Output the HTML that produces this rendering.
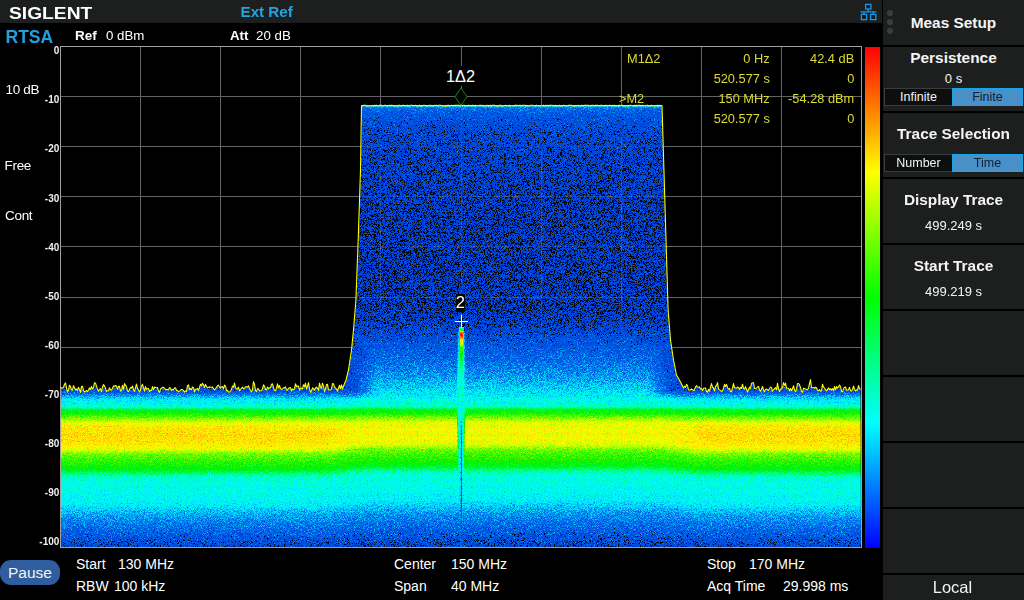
<!DOCTYPE html>
<html><head><meta charset="utf-8"><title>RTSA</title>
<style>
html,body{margin:0;padding:0;background:#000;}
body{width:1024px;height:600px;position:relative;overflow:hidden;font-family:"Liberation Sans",sans-serif;color:#fff;font-size:14px;}
.abs{position:absolute;white-space:nowrap;}
#top{left:0;top:0;width:882px;height:23px;background:#1c1f1e;}
.t{position:absolute;white-space:nowrap;line-height:16px;}
.b{font-weight:bold;}
.yl{position:absolute;right:964.7px;font-size:10px;font-weight:bold;line-height:12px;text-align:right;color:#f0f0f0;}
.mk{position:absolute;color:#dcdc30;font-size:13.4px;line-height:16px;white-space:nowrap;transform:scaleX(0.955);transform-origin:0 50%;}
.mr{text-align:right;transform-origin:100% 50%;}
#panel{position:absolute;left:883px;top:0;width:141px;height:600px;background:#000;}
.btn{position:absolute;left:0;width:141px;background:#1c1f1d;text-align:center;}
.bt{position:absolute;left:0;width:141px;text-align:center;font-weight:bold;font-size:15.4px;line-height:18px;color:#f4f4f4;}
.bv{position:absolute;left:0;width:141px;text-align:center;font-size:13px;line-height:16px;color:#f4f4f4;}
.tg{position:absolute;top:40.5px;height:16px;font-size:12.5px;line-height:16px;text-align:center;}
.tgl{left:1px;width:67px;background:#0d0f0e;border:1px solid #3a3d3c;color:#f4f4f4;}
.tgr{left:69px;width:69px;background:#4a90c8;border:1px solid #16a6e8;color:#10202c;}
</style></head><body>
<div id="top" class="abs"></div>
<svg class="abs" style="left:0;top:0" width="1024" height="600" viewBox="0 0 1024 600">
<defs>
<linearGradient id="gf" gradientUnits="userSpaceOnUse" x1="0" y1="376" x2="0" y2="547"><stop offset="0.0000" stop-color="rgb(9,102,0)"/><stop offset="0.0585" stop-color="rgb(13,102,0)"/><stop offset="0.0819" stop-color="rgb(19,102,0)"/><stop offset="0.0994" stop-color="rgb(31,102,0)"/><stop offset="0.1111" stop-color="rgb(42,92,0)"/><stop offset="0.1228" stop-color="rgb(54,82,0)"/><stop offset="0.1345" stop-color="rgb(62,82,0)"/><stop offset="0.1462" stop-color="rgb(68,82,0)"/><stop offset="0.1637" stop-color="rgb(73,82,0)"/><stop offset="0.1813" stop-color="rgb(79,82,0)"/><stop offset="0.1901" stop-color="rgb(97,82,0)"/><stop offset="0.1988" stop-color="rgb(115,82,0)"/><stop offset="0.2222" stop-color="rgb(133,82,0)"/><stop offset="0.2339" stop-color="rgb(145,82,0)"/><stop offset="0.2456" stop-color="rgb(156,82,0)"/><stop offset="0.2573" stop-color="rgb(166,82,0)"/><stop offset="0.2690" stop-color="rgb(176,82,0)"/><stop offset="0.2807" stop-color="rgb(186,82,0)"/><stop offset="0.2924" stop-color="rgb(194,82,0)"/><stop offset="0.3158" stop-color="rgb(199,82,0)"/><stop offset="0.3450" stop-color="rgb(201,82,0)"/><stop offset="0.3743" stop-color="rgb(199,82,0)"/><stop offset="0.4035" stop-color="rgb(195,82,0)"/><stop offset="0.4211" stop-color="rgb(189,82,0)"/><stop offset="0.4327" stop-color="rgb(178,82,0)"/><stop offset="0.4444" stop-color="rgb(166,82,0)"/><stop offset="0.4561" stop-color="rgb(156,82,0)"/><stop offset="0.4795" stop-color="rgb(147,82,0)"/><stop offset="0.5029" stop-color="rgb(139,82,0)"/><stop offset="0.5263" stop-color="rgb(130,82,0)"/><stop offset="0.5497" stop-color="rgb(117,82,0)"/><stop offset="0.5673" stop-color="rgb(99,82,0)"/><stop offset="0.5848" stop-color="rgb(84,82,0)"/><stop offset="0.6082" stop-color="rgb(76,66,0)"/><stop offset="0.6316" stop-color="rgb(74,61,0)"/><stop offset="0.6959" stop-color="rgb(71,61,0)"/><stop offset="0.7485" stop-color="rgb(68,66,0)"/><stop offset="0.7836" stop-color="rgb(57,76,0)"/><stop offset="0.8129" stop-color="rgb(50,82,0)"/><stop offset="0.8538" stop-color="rgb(42,82,0)"/><stop offset="0.9006" stop-color="rgb(33,102,0)"/><stop offset="0.9474" stop-color="rgb(24,115,0)"/><stop offset="1.0000" stop-color="rgb(15,128,0)"/></linearGradient>
<linearGradient id="gb" gradientUnits="userSpaceOnUse" x1="0" y1="104" x2="0" y2="398"><stop offset="0.0000" stop-color="rgb(54,64,0)"/><stop offset="0.0085" stop-color="rgb(54,64,0)"/><stop offset="0.0136" stop-color="rgb(36,84,0)"/><stop offset="0.0272" stop-color="rgb(28,97,0)"/><stop offset="0.0544" stop-color="rgb(22,107,0)"/><stop offset="0.1054" stop-color="rgb(15,115,0)"/><stop offset="0.1905" stop-color="rgb(11,115,0)"/><stop offset="0.3265" stop-color="rgb(8,115,0)"/><stop offset="0.4626" stop-color="rgb(7,115,0)"/><stop offset="0.6837" stop-color="rgb(7,115,0)"/><stop offset="0.7347" stop-color="rgb(10,115,0)"/><stop offset="0.7687" stop-color="rgb(15,115,0)"/><stop offset="0.8027" stop-color="rgb(22,112,0)"/><stop offset="0.8367" stop-color="rgb(28,107,0)"/><stop offset="0.8707" stop-color="rgb(34,102,0)"/><stop offset="0.8980" stop-color="rgb(40,99,0)"/><stop offset="0.9252" stop-color="rgb(46,97,0)"/><stop offset="0.9558" stop-color="rgb(55,92,0)"/><stop offset="0.9796" stop-color="rgb(62,87,0)"/><stop offset="1.0000" stop-color="rgb(69,82,0)"/></linearGradient>
<linearGradient id="gi" gradientUnits="userSpaceOnUse" x1="0" y1="398" x2="0" y2="547"><stop offset="0.0000" stop-color="rgb(69,82,0)"/><stop offset="0.0201" stop-color="rgb(73,82,0)"/><stop offset="0.0403" stop-color="rgb(76,82,0)"/><stop offset="0.0604" stop-color="rgb(84,82,0)"/><stop offset="0.0705" stop-color="rgb(102,82,0)"/><stop offset="0.0805" stop-color="rgb(117,82,0)"/><stop offset="0.1074" stop-color="rgb(135,82,0)"/><stop offset="0.1208" stop-color="rgb(148,82,0)"/><stop offset="0.1342" stop-color="rgb(158,82,0)"/><stop offset="0.1477" stop-color="rgb(168,82,0)"/><stop offset="0.1611" stop-color="rgb(178,82,0)"/><stop offset="0.1745" stop-color="rgb(182,82,0)"/><stop offset="0.1946" stop-color="rgb(186,82,0)"/><stop offset="0.2215" stop-color="rgb(187,82,0)"/><stop offset="0.2550" stop-color="rgb(187,82,0)"/><stop offset="0.2886" stop-color="rgb(185,82,0)"/><stop offset="0.3087" stop-color="rgb(180,82,0)"/><stop offset="0.3221" stop-color="rgb(172,82,0)"/><stop offset="0.3356" stop-color="rgb(163,82,0)"/><stop offset="0.3490" stop-color="rgb(153,82,0)"/><stop offset="0.3758" stop-color="rgb(145,82,0)"/><stop offset="0.4027" stop-color="rgb(138,82,0)"/><stop offset="0.4295" stop-color="rgb(130,82,0)"/><stop offset="0.4564" stop-color="rgb(117,82,0)"/><stop offset="0.4765" stop-color="rgb(99,82,0)"/><stop offset="0.4966" stop-color="rgb(84,82,0)"/><stop offset="0.5235" stop-color="rgb(76,66,0)"/><stop offset="0.5503" stop-color="rgb(74,61,0)"/><stop offset="0.6309" stop-color="rgb(70,61,0)"/><stop offset="0.6913" stop-color="rgb(65,66,0)"/><stop offset="0.7315" stop-color="rgb(56,76,0)"/><stop offset="0.7651" stop-color="rgb(48,82,0)"/><stop offset="0.8121" stop-color="rgb(41,82,0)"/><stop offset="0.8658" stop-color="rgb(32,107,0)"/><stop offset="0.9262" stop-color="rgb(23,128,0)"/><stop offset="1.0000" stop-color="rgb(13,140,0)"/></linearGradient>
<linearGradient id="gsO" gradientUnits="userSpaceOnUse" x1="0" y1="324" x2="0" y2="547"><stop offset="0.0000" stop-color="rgb(51,82,0)"/><stop offset="0.0135" stop-color="rgb(56,82,0)"/><stop offset="0.0493" stop-color="rgb(69,82,0)"/><stop offset="0.0942" stop-color="rgb(71,82,0)"/><stop offset="0.1614" stop-color="rgb(71,82,0)"/><stop offset="0.2511" stop-color="rgb(73,82,0)"/><stop offset="0.3632" stop-color="rgb(74,82,0)"/><stop offset="0.3946" stop-color="rgb(76,82,0)"/><stop offset="0.5650" stop-color="rgb(74,82,0)"/><stop offset="0.6996" stop-color="rgb(69,82,0)"/><stop offset="0.7892" stop-color="rgb(61,82,0)"/><stop offset="0.8789" stop-color="rgb(48,82,0)"/><stop offset="1.0000" stop-color="rgb(26,82,0)"/></linearGradient>
<linearGradient id="gsC" gradientUnits="userSpaceOnUse" x1="0" y1="324" x2="0" y2="547"><stop offset="0.0000" stop-color="rgb(64,82,0)"/><stop offset="0.0157" stop-color="rgb(69,82,0)"/><stop offset="0.0224" stop-color="rgb(102,82,0)"/><stop offset="0.0291" stop-color="rgb(133,82,0)"/><stop offset="0.0336" stop-color="rgb(191,82,0)"/><stop offset="0.0404" stop-color="rgb(247,82,0)"/><stop offset="0.0538" stop-color="rgb(247,82,0)"/><stop offset="0.0628" stop-color="rgb(222,82,0)"/><stop offset="0.0717" stop-color="rgb(199,82,0)"/><stop offset="0.0852" stop-color="rgb(184,82,0)"/><stop offset="0.0987" stop-color="rgb(158,82,0)"/><stop offset="0.1166" stop-color="rgb(133,82,0)"/><stop offset="0.1435" stop-color="rgb(115,82,0)"/><stop offset="0.1704" stop-color="rgb(97,82,0)"/><stop offset="0.2063" stop-color="rgb(84,82,0)"/><stop offset="0.2511" stop-color="rgb(79,82,0)"/><stop offset="0.3408" stop-color="rgb(79,82,0)"/><stop offset="0.3857" stop-color="rgb(76,82,0)"/><stop offset="0.4305" stop-color="rgb(64,82,0)"/><stop offset="0.4843" stop-color="rgb(36,82,0)"/><stop offset="0.7892" stop-color="rgb(28,82,0)"/><stop offset="0.9238" stop-color="rgb(13,128,0)"/><stop offset="1.0000" stop-color="rgb(5,128,0)"/></linearGradient>
<linearGradient id="shl" x1="0" y1="0" x2="1" y2="0"><stop offset="0" stop-color="#000" stop-opacity="0.55"/><stop offset="1" stop-color="#000" stop-opacity="0"/></linearGradient>
<linearGradient id="shr" x1="1" y1="0" x2="0" y2="0"><stop offset="0" stop-color="#000" stop-opacity="0.55"/><stop offset="1" stop-color="#000" stop-opacity="0"/></linearGradient>
<linearGradient id="cbar" x1="0" y1="0" x2="0" y2="1">
<stop offset="0" stop-color="#ff0000"/><stop offset="0.125" stop-color="#ff8000"/><stop offset="0.25" stop-color="#ffff00"/><stop offset="0.375" stop-color="#80ff00"/><stop offset="0.5" stop-color="#00ff00"/>
<stop offset="0.625" stop-color="#00ff80"/><stop offset="0.75" stop-color="#00ffff"/><stop offset="0.875" stop-color="#0080ff"/><stop offset="1" stop-color="#0000ff"/>
</linearGradient>
<filter id="dens" filterUnits="userSpaceOnUse" x="60" y="100" width="802" height="448" color-interpolation-filters="sRGB">
<feTurbulence type="fractalNoise" baseFrequency="2.3 1.13" numOctaves="1" seed="3" result="t"/>
<feColorMatrix in="t" type="matrix" values="1 0 0 0 0  1 0 0 0 0  1 0 0 0 0  0 0 0 0 1" result="n"/>
<feColorMatrix in="SourceGraphic" type="matrix" values="0 1 0 0 0  0 1 0 0 0  0 1 0 0 0  0 0 0 0 1" result="A"/>
<feColorMatrix in="SourceGraphic" type="matrix" values="1 0 0 0 0  1 0 0 0 0  1 0 0 0 0  0 0 0 0 1" result="B"/>
<feComposite in="A" in2="n" operator="arithmetic" k1="1" k2="0" k3="0" k4="0" result="P"/>
<feComposite in="P" in2="A" operator="arithmetic" k1="0" k2="1" k3="-0.5" k4="0.35" result="P2"/>
<feComposite in="B" in2="P2" operator="arithmetic" k1="0" k2="1" k3="1" k4="-0.35" result="v"/>
<feComponentTransfer in="v" result="c">
<feFuncR type="table" tableValues="0.000 0.000 0.000 0.000 0.000 0.000 0.000 0.000 0.000 0.000 0.000 0.000 0.000 0.000 0.000 0.000 0.000 0.000 0.000 0.000 0.000 0.000 0.000 0.000 0.000 0.000 0.000 0.000 0.000 0.000 0.000 0.000 0.000 0.054 0.107 0.161 0.214 0.268 0.352 0.439 0.527 0.614 0.691 0.752 0.814 0.875 0.936 0.982 0.987 0.992 0.997 1.000 1.000 1.000 1.000 1.000 1.000 1.000 1.000 1.000 1.000 1.000 1.000 1.000 1.000"/>
<feFuncG type="table" tableValues="0.000 0.219 0.238 0.256 0.274 0.294 0.317 0.339 0.361 0.407 0.462 0.518 0.600 0.689 0.775 0.855 0.920 0.951 0.982 1.000 1.000 1.000 1.000 0.996 0.990 0.984 0.978 0.972 0.966 0.960 0.953 0.947 0.941 0.949 0.956 0.964 0.972 0.979 0.984 0.989 0.993 0.997 1.000 1.000 1.000 1.000 1.000 0.991 0.961 0.930 0.900 0.855 0.794 0.733 0.672 0.610 0.549 0.480 0.412 0.343 0.275 0.206 0.137 0.069 0.000"/>
<feFuncB type="table" tableValues="0.000 0.804 0.824 0.839 0.855 0.868 0.878 0.888 0.899 0.911 0.925 0.938 0.954 0.970 0.984 0.993 0.991 0.964 0.937 0.888 0.811 0.735 0.658 0.570 0.473 0.377 0.281 0.191 0.153 0.115 0.077 0.038 0.000 0.000 0.000 0.000 0.000 0.000 0.000 0.000 0.000 0.000 0.000 0.000 0.000 0.000 0.000 0.000 0.000 0.000 0.000 0.000 0.000 0.000 0.000 0.000 0.000 0.000 0.000 0.000 0.000 0.000 0.000 0.000 0.000"/>
</feComponentTransfer>
<feColorMatrix in="c" type="matrix" values="1 0 0 0 0  0 1 0 0 0  0 0 1 0 0  12 12 12 0 0" result="c2"/>
<feComposite in="c2" in2="SourceAlpha" operator="in"/>
</filter>
<linearGradient id="mg" gradientUnits="userSpaceOnUse" x1="325" y1="0" x2="700" y2="0"><stop offset="0" stop-color="#000"/><stop offset="0.1" stop-color="#fff"/><stop offset="0.9" stop-color="#fff"/><stop offset="1" stop-color="#000"/></linearGradient>
<mask id="mi" maskUnits="userSpaceOnUse" x="325" y="390" width="375" height="160"><rect x="325" y="390" width="375" height="160" fill="url(#mg)"/></mask>
<linearGradient id="shL" gradientUnits="userSpaceOnUse" x1="346" y1="0" x2="376" y2="0"><stop offset="0" stop-color="rgb(19,102,0)" stop-opacity="1"/><stop offset="0.35" stop-color="rgb(19,102,0)" stop-opacity="0.85"/><stop offset="1" stop-color="rgb(19,102,0)" stop-opacity="0"/></linearGradient>
<linearGradient id="shR" gradientUnits="userSpaceOnUse" x1="680" y1="0" x2="648" y2="0"><stop offset="0" stop-color="rgb(19,102,0)" stop-opacity="1"/><stop offset="0.35" stop-color="rgb(19,102,0)" stop-opacity="0.85"/><stop offset="1" stop-color="rgb(19,102,0)" stop-opacity="0"/></linearGradient>
<linearGradient id="shV" gradientUnits="userSpaceOnUse" x1="0" y1="320" x2="0" y2="400"><stop offset="0" stop-color="#000"/><stop offset="0.3" stop-color="#fff"/><stop offset="0.88" stop-color="#fff"/><stop offset="1" stop-color="#000"/></linearGradient>
<mask id="ms" maskUnits="userSpaceOnUse" x="330" y="320" width="370" height="80"><rect x="330" y="320" width="370" height="80" fill="url(#shV)"/></mask>
<clipPath id="blk"><polygon points="362.0,105.0 361.0,170.0 358.8,240.0 356.4,300.0 354.0,330.0 352.0,350.0 349.0,370.0 346.5,380.0 344.0,386.0 340.0,398.0 686.0,398.0 683.0,388.0 680.0,382.0 676.0,375.0 673.0,360.0 670.0,340.0 667.6,310.0 661.5,105.0"/></clipPath>
<clipPath id="plotclip"><rect x="61" y="47" width="800" height="500"/></clipPath>
</defs>
<!-- grid -->
<g stroke="#646464" stroke-width="1" shape-rendering="crispEdges"><line x1="140.5" y1="47" x2="140.5" y2="547" /><line x1="61" y1="96.5" x2="861" y2="96.5" /><line x1="220.5" y1="47" x2="220.5" y2="547" /><line x1="61" y1="146.5" x2="861" y2="146.5" /><line x1="300.5" y1="47" x2="300.5" y2="547" /><line x1="61" y1="196.5" x2="861" y2="196.5" /><line x1="380.5" y1="47" x2="380.5" y2="547" /><line x1="61" y1="246.5" x2="861" y2="246.5" /><line x1="461.5" y1="47" x2="461.5" y2="547" /><line x1="61" y1="297.5" x2="861" y2="297.5" /><line x1="541.5" y1="47" x2="541.5" y2="547" /><line x1="61" y1="347.5" x2="861" y2="347.5" /><line x1="621.5" y1="47" x2="621.5" y2="547" /><line x1="61" y1="397.5" x2="861" y2="397.5" /><line x1="701.5" y1="47" x2="701.5" y2="547" /><line x1="61" y1="447.5" x2="861" y2="447.5" /><line x1="781.5" y1="47" x2="781.5" y2="547" /><line x1="61" y1="497.5" x2="861" y2="497.5" /></g>
<rect x="60.5" y="46.5" width="801" height="501" fill="none" stroke="#a0a0a0" stroke-width="1" shape-rendering="crispEdges"/>
<!-- density -->
<g clip-path="url(#plotclip)">
<g filter="url(#dens)">
<polygon points="61,547 60.5,387.6 61.5,388.8 62.5,388.5 63.5,387.7 64.5,384.8 65.5,383.4 66.5,388.5 67.5,392.6 68.5,390.4 69.5,385.7 70.5,387.0 71.5,390.3 72.5,390.7 73.5,386.2 74.5,388.2 75.5,390.5 76.5,389.5 77.5,390.8 78.5,387.7 79.5,390.1 80.5,392.9 81.5,386.8 82.5,386.8 83.5,390.8 84.5,392.5 85.5,391.9 86.5,391.0 87.5,392.0 88.5,390.8 89.5,388.2 90.5,390.1 91.5,387.0 92.5,389.5 93.5,388.4 94.5,383.2 95.5,383.7 96.5,386.7 97.5,389.7 98.5,391.8 99.5,389.9 100.5,389.2 101.5,392.1 102.5,387.5 103.5,385.1 104.5,386.5 105.5,388.7 106.5,392.1 107.5,391.2 108.5,391.1 109.5,388.3 110.5,390.6 111.5,390.4 112.5,389.0 113.5,386.5 114.5,386.8 115.5,386.0 116.5,386.7 117.5,389.8 118.5,386.7 119.5,386.9 120.5,391.8 121.5,391.1 122.5,385.8 123.5,389.9 124.5,384.0 125.5,385.7 126.5,387.4 127.5,391.5 128.5,392.1 129.5,390.0 130.5,388.0 131.5,388.6 132.5,386.5 133.5,390.2 134.5,391.9 135.5,388.2 136.5,384.6 137.5,389.2 138.5,390.4 139.5,392.4 140.5,390.6 141.5,386.7 142.5,384.8 143.5,388.4 144.5,391.6 145.5,387.0 146.5,389.7 147.5,389.3 148.5,388.9 149.5,392.1 150.5,390.7 151.5,391.1 152.5,387.1 153.5,390.1 154.5,387.5 155.5,388.1 156.5,388.3 157.5,388.0 158.5,391.6 159.5,392.8 160.5,389.7 161.5,388.7 162.5,387.9 163.5,387.8 164.5,388.9 165.5,390.3 166.5,390.1 167.5,390.1 168.5,390.4 169.5,388.0 170.5,388.6 171.5,391.0 172.5,389.9 173.5,390.2 174.5,388.6 175.5,388.3 176.5,391.0 177.5,391.1 178.5,392.2 179.5,391.6 180.5,390.5 181.5,390.1 182.5,390.1 183.5,391.1 184.5,392.7 185.5,391.4 186.5,391.9 187.5,386.2 188.5,385.4 189.5,390.3 190.5,389.2 191.5,390.3 192.5,387.5 193.5,388.2 194.5,392.2 195.5,389.7 196.5,389.7 197.5,388.9 198.5,390.7 199.5,388.0 200.5,384.7 201.5,386.4 202.5,383.8 203.5,385.2 204.5,388.1 205.5,384.9 206.5,387.0 207.5,388.3 208.5,387.7 209.5,387.4 210.5,387.8 211.5,387.7 212.5,387.5 213.5,389.2 214.5,390.4 215.5,389.3 216.5,387.7 217.5,386.2 218.5,385.6 219.5,387.9 220.5,388.4 221.5,387.4 222.5,387.1 223.5,389.5 224.5,385.6 225.5,386.7 226.5,391.1 227.5,390.9 228.5,392.5 229.5,392.7 230.5,391.5 231.5,389.8 232.5,386.6 233.5,387.7 234.5,383.5 235.5,388.4 236.5,389.4 237.5,389.6 238.5,387.6 239.5,391.3 240.5,390.0 241.5,388.9 242.5,387.6 243.5,389.2 244.5,388.8 245.5,387.4 246.5,387.4 247.5,387.4 248.5,386.3 249.5,389.1 250.5,391.0 251.5,392.3 252.5,390.2 253.5,382.1 254.5,384.8 255.5,391.1 256.5,392.1 257.5,389.1 258.5,389.6 259.5,391.6 260.5,391.2 261.5,391.2 262.5,389.4 263.5,385.4 264.5,386.6 265.5,390.0 266.5,390.4 267.5,387.6 268.5,389.3 269.5,388.3 270.5,388.3 271.5,384.7 272.5,384.4 273.5,388.1 274.5,390.9 275.5,391.1 276.5,388.6 277.5,384.3 278.5,388.4 279.5,386.0 280.5,389.3 281.5,389.7 282.5,389.7 283.5,388.4 284.5,388.1 285.5,387.4 286.5,390.7 287.5,390.6 288.5,388.8 289.5,388.4 290.5,388.1 291.5,391.6 292.5,389.4 293.5,390.4 294.5,389.4 295.5,384.3 296.5,387.0 297.5,386.6 298.5,386.6 299.5,390.8 300.5,389.0 301.5,388.5 302.5,389.4 303.5,385.2 304.5,387.2 305.5,383.7 306.5,389.6 307.5,386.8 308.5,383.1 309.5,389.4 310.5,392.7 311.5,391.3 312.5,388.3 313.5,389.1 314.5,390.8 315.5,388.5 316.5,387.7 317.5,388.8 318.5,391.0 319.5,383.6 320.5,387.5 321.5,388.8 322.5,383.7 323.5,386.4 324.5,392.0 325.5,389.6 326.5,385.1 327.5,384.8 328.5,390.5 329.5,390.6 330.5,390.2 331.5,389.6 332.5,384.1 333.5,384.2 334.5,387.4 335.5,388.6 336.5,389.5 337.5,391.7 338.5,388.8 339.5,385.7 340.5,389.1 341.5,385.3 342.5,389.7 345.0,388.5 682.0,388.5 684.5,386.8 685.5,388.0 686.5,384.9 687.5,386.0 688.5,390.5 689.5,390.5 690.5,390.4 691.5,389.5 692.5,390.2 693.5,391.1 694.5,390.3 695.5,387.6 696.5,386.2 697.5,387.5 698.5,387.8 699.5,387.4 700.5,389.4 701.5,389.2 702.5,391.1 703.5,388.8 704.5,388.8 705.5,388.4 706.5,391.8 707.5,392.7 708.5,389.9 709.5,391.7 710.5,387.7 711.5,384.1 712.5,387.7 713.5,388.4 714.5,391.5 715.5,386.8 716.5,386.3 717.5,383.1 718.5,389.4 719.5,390.5 720.5,390.7 721.5,392.2 722.5,391.3 723.5,388.6 724.5,384.8 725.5,387.2 726.5,384.9 727.5,387.9 728.5,389.7 729.5,388.9 730.5,392.0 731.5,391.9 732.5,388.3 733.5,384.1 734.5,388.1 735.5,388.6 736.5,388.8 737.5,387.5 738.5,388.0 739.5,390.1 740.5,387.9 741.5,388.9 742.5,384.7 743.5,389.2 744.5,389.7 745.5,387.1 746.5,389.8 747.5,392.5 748.5,390.0 749.5,387.7 750.5,388.9 751.5,383.9 752.5,383.2 753.5,383.4 754.5,388.8 755.5,389.0 756.5,388.7 757.5,387.5 758.5,387.0 759.5,390.4 760.5,391.8 761.5,389.5 762.5,387.0 763.5,390.2 764.5,392.3 765.5,389.9 766.5,389.5 767.5,390.2 768.5,390.9 769.5,389.2 770.5,387.5 771.5,388.1 772.5,391.8 773.5,390.3 774.5,389.1 775.5,388.2 776.5,390.3 777.5,383.9 778.5,389.0 779.5,392.0 780.5,389.8 781.5,388.8 782.5,388.2 783.5,383.1 784.5,385.9 785.5,383.6 786.5,388.6 787.5,388.7 788.5,388.8 789.5,391.4 790.5,388.9 791.5,391.3 792.5,389.3 793.5,386.2 794.5,390.3 795.5,392.3 796.5,389.9 797.5,384.0 798.5,384.0 799.5,385.2 800.5,388.2 801.5,392.1 802.5,392.8 803.5,388.8 804.5,389.0 805.5,389.4 806.5,390.1 807.5,390.3 808.5,388.7 809.5,384.2 810.5,380.1 811.5,388.2 812.5,388.2 813.5,388.0 814.5,388.8 815.5,387.6 816.5,388.2 817.5,390.7 818.5,391.2 819.5,390.1 820.5,391.8 821.5,391.3 822.5,384.7 823.5,387.3 824.5,388.8 825.5,389.9 826.5,391.5 827.5,390.1 828.5,388.4 829.5,390.3 830.5,389.1 831.5,390.8 832.5,389.1 833.5,391.3 834.5,387.1 835.5,390.2 836.5,387.1 837.5,388.7 838.5,387.4 839.5,385.6 840.5,387.0 841.5,391.7 842.5,392.3 843.5,389.3 844.5,387.9 845.5,387.5 846.5,390.7 847.5,390.8 848.5,390.1 849.5,387.8 850.5,391.1 851.5,391.4 852.5,390.0 853.5,386.6 854.5,389.7 855.5,391.5 856.5,390.4 857.5,390.7 858.5,386.0 859.5,388.9 860.5,390.2 861,547" fill="url(#gf)"/>
<rect x="325" y="398" width="375" height="149" fill="url(#gi)" mask="url(#mi)"/>
<polygon points="362.0,105.0 361.0,170.0 358.8,240.0 356.4,300.0 354.0,330.0 352.0,350.0 349.0,370.0 346.5,380.0 344.0,386.0 340.0,398.0 686.0,398.0 683.0,388.0 680.0,382.0 676.0,375.0 673.0,360.0 670.0,340.0 667.6,310.0 661.5,105.0" fill="url(#gb)"/>
<g clip-path="url(#blk)"><g mask="url(#ms)"><rect x="340" y="320" width="40" height="80" fill="url(#shL)"/><rect x="645" y="320" width="45" height="80" fill="url(#shR)"/></g></g>
<polygon points="457.6,331 465,331 465.6,400 464.6,440 463.6,490 462.6,547 459.8,547 458.7,490 457.6,440 456.6,400" fill="url(#gsO)" fill-opacity="0.55"/>
<polygon points="458.7,327 464.0,327 464.3,400 463.7,450 462.9,500 462.4,547 460,547 459.4,500 458.6,450 457.8,400" fill="url(#gsO)"/>
<polygon points="459.6,327 463.0,327 463.0,395 462.1,422 461.9,547 460.8,547 460.7,422 459.6,395" fill="url(#gsC)"/>
</g>
</g>
<polyline points="60.5,387.1 61.5,388.3 62.5,388.0 63.5,387.2 64.5,384.3 65.5,382.9 66.5,388.0 67.5,392.1 68.5,389.9 69.5,385.2 70.5,386.5 71.5,389.8 72.5,390.2 73.5,385.7 74.5,387.7 75.5,390.0 76.5,389.0 77.5,390.3 78.5,387.2 79.5,389.6 80.5,392.4 81.5,386.3 82.5,386.3 83.5,390.3 84.5,392.0 85.5,391.4 86.5,390.5 87.5,391.5 88.5,390.3 89.5,387.7 90.5,389.6 91.5,386.5 92.5,389.0 93.5,387.9 94.5,382.7 95.5,383.2 96.5,386.2 97.5,389.2 98.5,391.3 99.5,389.4 100.5,388.7 101.5,391.6 102.5,387.0 103.5,384.6 104.5,386.0 105.5,388.2 106.5,391.6 107.5,390.7 108.5,390.6 109.5,387.8 110.5,390.1 111.5,389.9 112.5,388.5 113.5,386.0 114.5,386.3 115.5,385.5 116.5,386.2 117.5,389.3 118.5,386.2 119.5,386.4 120.5,391.3 121.5,390.6 122.5,385.3 123.5,389.4 124.5,383.5 125.5,385.2 126.5,386.9 127.5,391.0 128.5,391.6 129.5,389.5 130.5,387.5 131.5,388.1 132.5,386.0 133.5,389.7 134.5,391.4 135.5,387.7 136.5,384.1 137.5,388.7 138.5,389.9 139.5,391.9 140.5,390.1 141.5,386.2 142.5,384.3 143.5,387.9 144.5,391.1 145.5,386.5 146.5,389.2 147.5,388.8 148.5,388.4 149.5,391.6 150.5,390.2 151.5,390.6 152.5,386.6 153.5,389.6 154.5,387.0 155.5,387.6 156.5,387.8 157.5,387.5 158.5,391.1 159.5,392.3 160.5,389.2 161.5,388.2 162.5,387.4 163.5,387.3 164.5,388.4 165.5,389.8 166.5,389.6 167.5,389.6 168.5,389.9 169.5,387.5 170.5,388.1 171.5,390.5 172.5,389.4 173.5,389.7 174.5,388.1 175.5,387.8 176.5,390.5 177.5,390.6 178.5,391.7 179.5,391.1 180.5,390.0 181.5,389.6 182.5,389.6 183.5,390.6 184.5,392.2 185.5,390.9 186.5,391.4 187.5,385.7 188.5,384.9 189.5,389.8 190.5,388.7 191.5,389.8 192.5,387.0 193.5,387.7 194.5,391.7 195.5,389.2 196.5,389.2 197.5,388.4 198.5,390.2 199.5,387.5 200.5,384.2 201.5,385.9 202.5,383.3 203.5,384.7 204.5,387.6 205.5,384.4 206.5,386.5 207.5,387.8 208.5,387.2 209.5,386.9 210.5,387.3 211.5,387.2 212.5,387.0 213.5,388.7 214.5,389.9 215.5,388.8 216.5,387.2 217.5,385.7 218.5,385.1 219.5,387.4 220.5,387.9 221.5,386.9 222.5,386.6 223.5,389.0 224.5,385.1 225.5,386.2 226.5,390.6 227.5,390.4 228.5,392.0 229.5,392.2 230.5,391.0 231.5,389.3 232.5,386.1 233.5,387.2 234.5,383.0 235.5,387.9 236.5,388.9 237.5,389.1 238.5,387.1 239.5,390.8 240.5,389.5 241.5,388.4 242.5,387.1 243.5,388.7 244.5,388.3 245.5,386.9 246.5,386.9 247.5,386.9 248.5,385.8 249.5,388.6 250.5,390.5 251.5,391.8 252.5,389.7 253.5,381.6 254.5,384.3 255.5,390.6 256.5,391.6 257.5,388.6 258.5,389.1 259.5,391.1 260.5,390.7 261.5,390.7 262.5,388.9 263.5,384.9 264.5,386.1 265.5,389.5 266.5,389.9 267.5,387.1 268.5,388.8 269.5,387.8 270.5,387.8 271.5,384.2 272.5,383.9 273.5,387.6 274.5,390.4 275.5,390.6 276.5,388.1 277.5,383.8 278.5,387.9 279.5,385.5 280.5,388.8 281.5,389.2 282.5,389.2 283.5,387.9 284.5,387.6 285.5,386.9 286.5,390.2 287.5,390.1 288.5,388.3 289.5,387.9 290.5,387.6 291.5,391.1 292.5,388.9 293.5,389.9 294.5,388.9 295.5,383.8 296.5,386.5 297.5,386.1 298.5,386.1 299.5,390.3 300.5,388.5 301.5,388.0 302.5,388.9 303.5,384.7 304.5,386.7 305.5,383.2 306.5,389.1 307.5,386.3 308.5,382.6 309.5,388.9 310.5,392.2 311.5,390.8 312.5,387.8 313.5,388.6 314.5,390.3 315.5,388.0 316.5,387.2 317.5,388.3 318.5,390.5 319.5,383.1 320.5,387.0 321.5,388.3 322.5,383.2 323.5,385.9 324.5,391.5 325.5,389.1 326.5,384.6 327.5,384.3 328.5,390.0 329.5,390.1 330.5,389.7 331.5,389.1 332.5,383.6 333.5,383.7 334.5,386.9 335.5,388.1 336.5,389.0 337.5,391.2 338.5,388.3 339.5,385.2 340.5,388.6 341.5,384.8 342.5,389.2 343.5,386.0 346.0,380.0 348.5,370.0 351.5,350.0 353.5,330.0 355.9,300.0 358.2,240.0 360.5,170.0 361.5,105.5 362.5,105.9 363.5,105.3 364.5,105.2 365.5,105.3 366.5,105.6 367.5,105.7 368.5,105.9 369.5,105.7 370.5,105.7 371.5,105.8 372.5,105.5 373.5,105.6 374.5,105.2 375.5,105.8 376.5,105.3 377.5,105.9 378.5,105.7 379.5,105.4 380.5,105.3 381.5,105.4 382.5,105.7 383.5,105.7 384.5,105.2 385.5,105.2 386.5,105.6 387.5,105.6 388.5,105.5 389.5,105.3 390.5,105.6 391.5,105.2 392.5,105.4 393.5,105.5 394.5,105.9 395.5,105.7 396.5,105.9 397.5,105.5 398.5,105.3 399.5,105.3 400.5,105.9 401.5,105.7 402.5,105.4 403.5,105.2 404.5,105.5 405.5,105.7 406.5,105.5 407.5,105.4 408.5,105.7 409.5,105.9 410.5,105.3 411.5,105.2 412.5,105.4 413.5,105.5 414.5,105.7 415.5,105.3 416.5,105.8 417.5,105.7 418.5,105.6 419.5,105.3 420.5,105.9 421.5,105.4 422.5,105.8 423.5,105.3 424.5,105.3 425.5,105.8 426.5,105.4 427.5,105.9 428.5,105.5 429.5,105.3 430.5,105.3 431.5,105.5 432.5,105.7 433.5,105.9 434.5,105.3 435.5,105.5 436.5,105.3 437.5,105.9 438.5,105.3 439.5,105.2 440.5,105.2 441.5,105.5 442.5,105.9 443.5,105.9 444.5,105.7 445.5,105.9 446.5,105.9 447.5,105.4 448.5,105.3 449.5,105.9 450.5,105.7 451.5,105.2 452.5,105.7 453.5,105.5 454.5,105.4 455.5,105.4 456.5,105.3 457.5,105.2 458.5,105.4 459.5,105.4 460.5,105.9 461.5,105.2 462.5,105.9 463.5,105.3 464.5,105.4 465.5,105.8 466.5,105.8 467.5,105.5 468.5,105.2 469.5,105.5 470.5,105.4 471.5,105.9 472.5,105.3 473.5,105.4 474.5,105.9 475.5,105.2 476.5,105.5 477.5,105.8 478.5,105.8 479.5,105.2 480.5,105.2 481.5,105.2 482.5,105.9 483.5,105.4 484.5,105.7 485.5,105.9 486.5,105.4 487.5,105.4 488.5,105.9 489.5,105.6 490.5,105.4 491.5,105.7 492.5,105.4 493.5,105.4 494.5,105.2 495.5,105.8 496.5,105.9 497.5,105.7 498.5,105.9 499.5,105.2 500.5,105.3 501.5,105.5 502.5,105.9 503.5,105.9 504.5,105.5 505.5,105.4 506.5,105.5 507.5,105.5 508.5,105.9 509.5,105.3 510.5,105.8 511.5,105.7 512.5,105.8 513.5,105.8 514.5,105.6 515.5,105.4 516.5,105.4 517.5,105.4 518.5,105.8 519.5,105.2 520.5,105.3 521.5,105.8 522.5,105.3 523.5,105.2 524.5,105.2 525.5,105.6 526.5,105.4 527.5,105.9 528.5,105.9 529.5,105.9 530.5,105.4 531.5,105.2 532.5,105.2 533.5,105.5 534.5,105.7 535.5,105.5 536.5,105.3 537.5,105.5 538.5,105.6 539.5,105.7 540.5,105.7 541.5,105.8 542.5,105.7 543.5,105.2 544.5,105.8 545.5,105.4 546.5,105.6 547.5,105.4 548.5,105.7 549.5,105.3 550.5,105.3 551.5,105.3 552.5,105.3 553.5,105.9 554.5,105.6 555.5,105.4 556.5,105.5 557.5,105.9 558.5,105.6 559.5,105.3 560.5,105.8 561.5,105.7 562.5,105.9 563.5,105.2 564.5,105.5 565.5,105.8 566.5,105.8 567.5,105.9 568.5,105.2 569.5,105.4 570.5,105.2 571.5,105.3 572.5,105.9 573.5,105.6 574.5,105.9 575.5,105.4 576.5,105.8 577.5,105.5 578.5,105.4 579.5,105.8 580.5,105.9 581.5,105.2 582.5,105.6 583.5,105.6 584.5,105.3 585.5,105.4 586.5,105.3 587.5,105.3 588.5,105.4 589.5,105.6 590.5,105.7 591.5,105.3 592.5,105.2 593.5,105.4 594.5,105.7 595.5,105.3 596.5,105.4 597.5,105.3 598.5,105.8 599.5,105.6 600.5,105.2 601.5,105.2 602.5,105.5 603.5,105.6 604.5,105.7 605.5,105.2 606.5,105.3 607.5,105.7 608.5,105.5 609.5,105.4 610.5,105.4 611.5,105.9 612.5,105.4 613.5,105.6 614.5,105.4 615.5,105.5 616.5,105.8 617.5,105.9 618.5,105.4 619.5,105.3 620.5,105.7 621.5,105.3 622.5,105.2 623.5,105.9 624.5,105.5 625.5,105.8 626.5,105.5 627.5,105.9 628.5,105.5 629.5,105.3 630.5,105.2 631.5,105.6 632.5,105.7 633.5,105.9 634.5,105.2 635.5,105.6 636.5,105.4 637.5,105.6 638.5,105.3 639.5,105.4 640.5,105.6 641.5,105.9 642.5,105.2 643.5,105.5 644.5,105.8 645.5,105.9 646.5,105.3 647.5,105.3 648.5,105.9 649.5,105.9 650.5,105.5 651.5,105.2 652.5,105.9 653.5,105.5 654.5,105.9 655.5,105.6 656.5,105.8 657.5,105.3 658.5,105.8 659.5,105.3 660.5,105.5 662.0,105.5 668.1,310.0 670.5,340.0 673.5,360.0 676.5,375.0 680.5,382.0 683.5,388.0 684.5,386.3 685.5,387.5 686.5,384.4 687.5,385.5 688.5,390.0 689.5,390.0 690.5,389.9 691.5,389.0 692.5,389.7 693.5,390.6 694.5,389.8 695.5,387.1 696.5,385.7 697.5,387.0 698.5,387.3 699.5,386.9 700.5,388.9 701.5,388.7 702.5,390.6 703.5,388.3 704.5,388.3 705.5,387.9 706.5,391.3 707.5,392.2 708.5,389.4 709.5,391.2 710.5,387.2 711.5,383.6 712.5,387.2 713.5,387.9 714.5,391.0 715.5,386.3 716.5,385.8 717.5,382.6 718.5,388.9 719.5,390.0 720.5,390.2 721.5,391.7 722.5,390.8 723.5,388.1 724.5,384.3 725.5,386.7 726.5,384.4 727.5,387.4 728.5,389.2 729.5,388.4 730.5,391.5 731.5,391.4 732.5,387.8 733.5,383.6 734.5,387.6 735.5,388.1 736.5,388.3 737.5,387.0 738.5,387.5 739.5,389.6 740.5,387.4 741.5,388.4 742.5,384.2 743.5,388.7 744.5,389.2 745.5,386.6 746.5,389.3 747.5,392.0 748.5,389.5 749.5,387.2 750.5,388.4 751.5,383.4 752.5,382.7 753.5,382.9 754.5,388.3 755.5,388.5 756.5,388.2 757.5,387.0 758.5,386.5 759.5,389.9 760.5,391.3 761.5,389.0 762.5,386.5 763.5,389.7 764.5,391.8 765.5,389.4 766.5,389.0 767.5,389.7 768.5,390.4 769.5,388.7 770.5,387.0 771.5,387.6 772.5,391.3 773.5,389.8 774.5,388.6 775.5,387.7 776.5,389.8 777.5,383.4 778.5,388.5 779.5,391.5 780.5,389.3 781.5,388.3 782.5,387.7 783.5,382.6 784.5,385.4 785.5,383.1 786.5,388.1 787.5,388.2 788.5,388.3 789.5,390.9 790.5,388.4 791.5,390.8 792.5,388.8 793.5,385.7 794.5,389.8 795.5,391.8 796.5,389.4 797.5,383.5 798.5,383.5 799.5,384.7 800.5,387.7 801.5,391.6 802.5,392.3 803.5,388.3 804.5,388.5 805.5,388.9 806.5,389.6 807.5,389.8 808.5,388.2 809.5,383.7 810.5,379.6 811.5,387.7 812.5,387.7 813.5,387.5 814.5,388.3 815.5,387.1 816.5,387.7 817.5,390.2 818.5,390.7 819.5,389.6 820.5,391.3 821.5,390.8 822.5,384.2 823.5,386.8 824.5,388.3 825.5,389.4 826.5,391.0 827.5,389.6 828.5,387.9 829.5,389.8 830.5,388.6 831.5,390.3 832.5,388.6 833.5,390.8 834.5,386.6 835.5,389.7 836.5,386.6 837.5,388.2 838.5,386.9 839.5,385.1 840.5,386.5 841.5,391.2 842.5,391.8 843.5,388.8 844.5,387.4 845.5,387.0 846.5,390.2 847.5,390.3 848.5,389.6 849.5,387.3 850.5,390.6 851.5,390.9 852.5,389.5 853.5,386.1 854.5,389.2 855.5,391.0 856.5,389.9 857.5,390.2 858.5,385.5 859.5,388.4 860.5,389.7" fill="none" stroke="#ffff00" stroke-width="1.1" stroke-linejoin="round"/>
<!-- markers -->
<polygon points="461,88 467,96.7 461,105.2 455,96.7" fill="#000" stroke="#0c8e0c" stroke-width="1"/>
<g stroke="#fff" stroke-width="1" shape-rendering="crispEdges"><line x1="455" y1="321.5" x2="468" y2="321.5"/><line x1="461.5" y1="315" x2="461.5" y2="328"/></g>
<!-- network icon -->
<g fill="#151817" stroke="#1a98ee" stroke-width="1.3"><rect x="865.6" y="4.4" width="5.3" height="4.6"/><rect x="861.4" y="14.4" width="5.2" height="5.2"/><rect x="870.6" y="14.4" width="5.2" height="5.2"/><path d="M868.2 9v3M860.5 11.9h15.8M864 11.9v2.5M873.2 11.9v2.5"/></g>
<!-- colorbar -->
<rect x="865" y="47" width="15" height="501" fill="url(#cbar)"/>
</svg>
<div class="yl" style="top:45.2px">0</div><div class="yl" style="top:94.3px">-10</div><div class="yl" style="top:143.4px">-20</div><div class="yl" style="top:192.5px">-30</div><div class="yl" style="top:241.6px">-40</div><div class="yl" style="top:290.7px">-50</div><div class="yl" style="top:339.8px">-60</div><div class="yl" style="top:388.9px">-70</div><div class="yl" style="top:438.0px">-80</div><div class="yl" style="top:487.1px">-90</div><div class="yl" style="top:536.2px">-100</div>

<div class="t b" id="logo" style="left:9px;top:4.5px;font-size:16.5px;line-height:16px;color:#fff;transform-origin:0 0;transform:scaleX(1.165);letter-spacing:0px">SIGLENT</div>
<div class="t b" style="left:240.5px;top:3.5px;font-size:15.2px;color:#22a4e6">Ext Ref</div>
<div class="t b" style="left:5.5px;top:28px;font-size:17.5px;line-height:18px;color:#22a0dc">RTSA</div>
<div class="t b" style="left:75px;top:27.5px;font-size:13.5px">Ref</div>
<div class="t" style="left:106px;top:27.5px;font-size:13.3px">0 dBm</div>
<div class="t b" style="left:230px;top:27.5px;font-size:13.3px">Att</div>
<div class="t" style="left:256px;top:27.5px;font-size:13.3px">20 dB</div>
<div class="t" style="left:5.5px;top:82px;font-size:13.5px;letter-spacing:-0.3px">10 dB</div>
<div class="t" style="left:4.5px;top:157.5px;font-size:13.5px;letter-spacing:-0.3px">Free</div>
<div class="t" style="left:5px;top:207.5px;font-size:13.5px;letter-spacing:-0.3px">Cont</div>
<div class="t" style="left:76px;top:556px">Start</div><div class="t" style="left:118px;top:556px">130 MHz</div>
<div class="t" style="left:76px;top:578px">RBW</div><div class="t" style="left:114px;top:578px">100 kHz</div>
<div class="t" style="left:394px;top:556px">Center</div><div class="t" style="left:451px;top:556px">150 MHz</div>
<div class="t" style="left:394px;top:578px">Span</div><div class="t" style="left:451px;top:578px">40 MHz</div>
<div class="t" style="left:707px;top:556px">Stop</div><div class="t" style="left:749px;top:556px">170 MHz</div>
<div class="t" style="left:707px;top:578px">Acq Time</div><div class="t" style="left:783px;top:578px">29.998 ms</div>
<div class="abs" style="left:0;top:560px;width:60px;height:25px;border-radius:11px;background:#2f5d9d;text-align:center;font-size:15.5px;line-height:25px;color:#f4f4f4">Pause</div>
<div class="mk" style="left:627px;top:51px">M1Δ2</div>
<div class="mk mr" style="right:254.5px;top:51px">0 Hz</div>
<div class="mk mr" style="right:169.5px;top:51px">42.4 dB</div>
<div class="mk mr" style="right:254.5px;top:71px">520.577 s</div>
<div class="mk mr" style="right:169.5px;top:71px">0</div>
<div class="mk" style="left:619px;top:91px">&gt;M2</div>
<div class="mk mr" style="right:254.5px;top:91px">150 MHz</div>
<div class="mk mr" style="right:169.5px;top:91px">-54.28 dBm</div>
<div class="mk mr" style="right:254.5px;top:111px">520.577 s</div>
<div class="mk mr" style="right:169.5px;top:111px">0</div>
<div class="t" style="left:445px;top:66px;width:31px;height:20px;background:#000;font-size:16.3px;line-height:20px;text-align:center">1Δ2</div>
<div class="t" style="left:456px;top:294px;width:9px;height:18px;background:#000;font-size:16.5px;line-height:17px;text-align:center;text-indent:-0.3px">2</div>
<div id="panel">
<div class="btn" style="top:0;height:45px"><div class="bt" style="top:14px;left:0px;width:141px">Meas Setup</div>
<svg class="abs" style="left:2px;top:8px" width="10" height="30"><circle cx="5" cy="5" r="3.1" fill="#363f41"/><circle cx="5" cy="14" r="3.1" fill="#363f41"/><circle cx="5" cy="22.8" r="3.1" fill="#363f41"/></svg></div>
<div class="btn" style="top:47px;height:64px"><div class="bt" style="top:2px">Persistence</div><div class="bv" style="top:24px">0 s</div>
<div class="tg tgl">Infinite</div><div class="tg tgr">Finite</div></div>
<div class="btn" style="top:113px;height:64px"><div class="bt" style="top:12px">Trace Selection</div>
<div class="tg tgl">Number</div><div class="tg tgr">Time</div></div>
<div class="btn" style="top:179px;height:64px"><div class="bt" style="top:12px">Display Trace</div><div class="bv" style="top:39px">499.249 s</div></div>
<div class="btn" style="top:245px;height:64px"><div class="bt" style="top:12px">Start Trace</div><div class="bv" style="top:39px">499.219 s</div></div>
<div class="btn" style="top:311px;height:64px"></div>
<div class="btn" style="top:377px;height:64px"></div>
<div class="btn" style="top:443px;height:64px"></div>
<div class="btn" style="top:509px;height:64px"></div>
<div class="btn" style="top:575px;height:25px"><div class="bv" style="top:2.8px;font-size:16.5px;line-height:18px;left:-1px">Local</div></div>
</div>
</body></html>
